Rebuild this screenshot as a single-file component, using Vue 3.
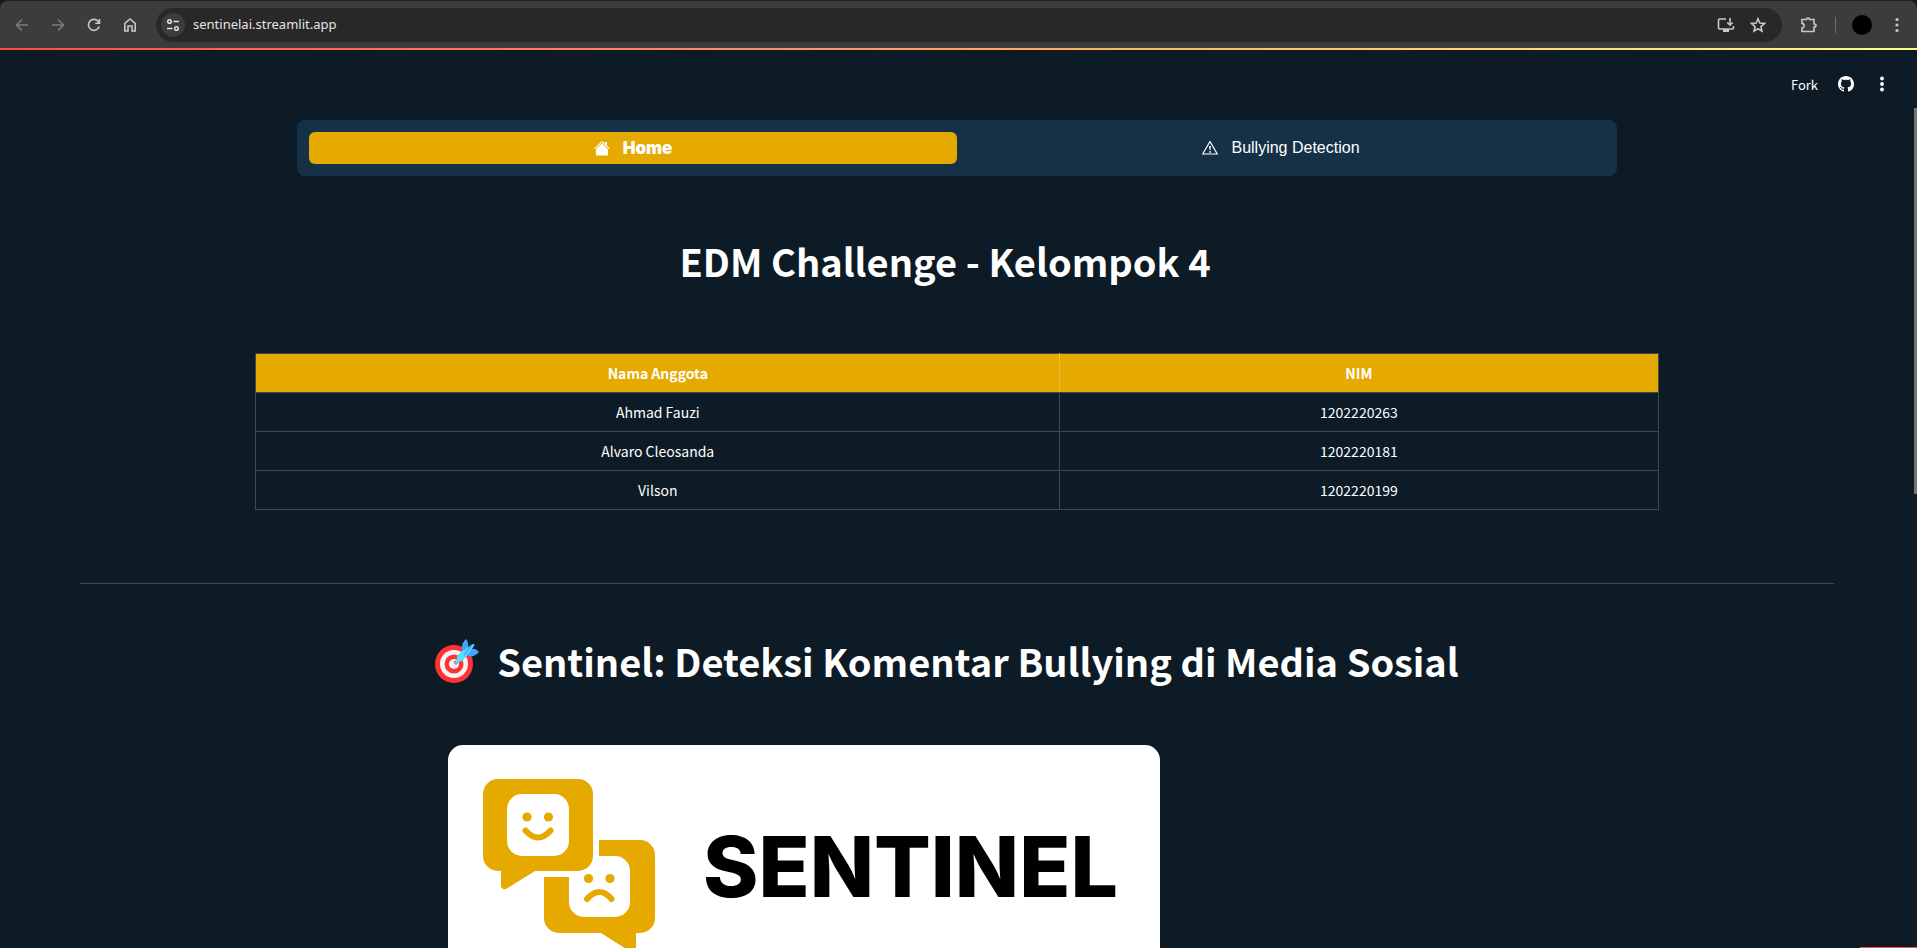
<script setup>
const members = [
  { name: 'Ahmad Fauzi', nim: '1202220263' },
  { name: 'Alvaro Cleosanda', nim: '1202220181' },
  { name: 'Vilson', nim: '1202220199' },
]
</script>

<template>
  <div class="window">
    <header class="browser">
      <nav class="controls" aria-label="Browser">
        <button class="icon-btn dim" aria-label="Back">
          <svg viewBox="0 0 16 16"><path d="M14 8H3M8 2.5 2.5 8 8 13.500" /></svg>
        </button>
        <button class="icon-btn dim" aria-label="Forward">
          <svg viewBox="0 0 16 16"><path d="M2 8h11M8 2.500 13.500 8 8 13.500" /></svg>
        </button>
        <button class="icon-btn" aria-label="Reload">
          <svg viewBox="0 0 16 16"><path d="M13.200 9.500A5.500 5.500 0 1 1 12.500 4.800L13.500 6M13.500 2v4.200H9.300" /></svg>
        </button>
        <button class="icon-btn" aria-label="Home page">
          <svg viewBox="0 0 16 16"><path d="M2.800 6.300 8 2l5.200 4.300V14H10V9H6v5H2.800z" /></svg>
        </button>
      </nav>
      <div class="address">
        <button class="site" aria-label="Site information">
          <svg viewBox="0 0 16 16"><circle cx="4.500" cy="4.500" r="1.800" /><path d="M8.500 4.500H14M2 11.500h5.500" /><circle cx="11.500" cy="11.500" r="1.800" /></svg>
        </button>
        <input class="url" aria-label="Address" value="sentinelai.streamlit.app" />
        <button class="icon-btn" aria-label="Install app">
          <svg class="wide" viewBox="0 0 18 16"><path d="M9 2H2.500Q1.500 2 1.500 3v8q0 1 1 1h13q1 0 1-1V9M13 1v7M10.300 5.500 13 8.200l2.700-2.700" /><path class="solid" d="M6 12h6v3H6z" /></svg>
        </button>
        <button class="icon-btn" aria-label="Bookmark">
          <svg viewBox="0 0 16 16"><path d="m8 1.800 1.800 4.300 4.600.4-3.500 3.100 1.100 4.600L8 11.800l-4 2.400 1.100-4.600L1.600 6.500l4.600-.4z" /></svg>
        </button>
      </div>
      <div class="extras">
        <button class="icon-btn" aria-label="Extensions">
          <svg class="wide" viewBox="0 0 18 16"><path d="M2 2.500h4.500Q6.500 1 8 1t1.500 1.500H14V7q2 0 2 1.500T14 10v4.500H2V11q2.200-.3 2.200-2.300T2 6.400z" /></svg>
        </button>
        <span class="divider"></span>
        <button class="avatar" aria-label="Profile"></button>
        <button class="icon-btn" aria-label="Browser menu">
          <svg viewBox="0 0 16 16"><g class="solid"><circle cx="8" cy="2.500" r="1.600" /><circle cx="8" cy="8" r="1.600" /><circle cx="8" cy="13.500" r="1.600" /></g></svg>
        </button>
      </div>
    </header>

    <div class="rainbow"></div>

    <div class="toolbar">
      <button class="fork">Fork</button>
      <a class="tool" href="#github" aria-label="GitHub repository">
        <svg viewBox="0 0 16 16"><path d="M8 0C3.580 0 0 3.580 0 8c0 3.540 2.290 6.530 5.470 7.590.4.070.55-.17.55-.38 0-.19-.01-.82-.01-1.490-2.010.37-2.530-.49-2.690-.94-.09-.23-.48-.94-.82-1.130-.28-.15-.68-.52-.01-.53.63-.01 1.080.58 1.230.82.72 1.210 1.870.87 2.330.66.070-.52.28-.87.510-1.070-1.780-.2-3.640-.89-3.640-3.950 0-.87.31-1.590.82-2.150-.08-.2-.36-1.020.08-2.120 0 0 .67-.21 2.200.82.64-.18 1.320-.27 2-.27s1.360.09 2 .27c1.530-1.040 2.200-.82 2.200-.82.44 1.100.16 1.920.08 2.120.51.56.82 1.270.82 2.150 0 3.070-1.870 3.750-3.650 3.950.29.25.54.73.54 1.480 0 1.070-.01 1.930-.01 2.200 0 .21.15.46.55.38A8.010 8.010 0 0 0 16 8c0-4.420-3.580-8-8-8z" /></svg>
      </a>
      <button class="tool" aria-label="App menu">
        <svg viewBox="0 0 16 16"><circle cx="8" cy="2.500" r="1.900" /><circle cx="8" cy="8" r="1.900" /><circle cx="8" cy="13.500" r="1.900" /></svg>
      </button>
    </div>

    <main class="page">
      <nav class="tabs" aria-label="Pages">
        <a class="tab active" href="#home">
          <svg viewBox="0 0 16 16"><path d="M8 3.300l6 6V14.500a1 1 0 0 1-1 1H3a1 1 0 0 1-1-1V9.300z" /><path d="M7.300 1.500a1 1 0 0 1 1.400 0L11 3.800V2h2v3.800l2.700 2.700-.7.700L8 2.200 1 9.200l-.7-.7z" /></svg>
          Home
        </a>
        <a class="tab" href="#detection">
          <svg viewBox="0 0 16 16"><path class="line" d="M8 1.500 15.300 14H.7z" /><path d="M7.100 6h1.800l-.4 4h-1z" /><circle cx="8" cy="11.900" r=".9" /></svg>
          Bullying Detection
        </a>
      </nav>

      <h1 class="title">EDM Challenge - Kelompok 4</h1>

      <table class="members">
        <thead>
          <tr><th scope="col">Nama Anggota</th><th scope="col">NIM</th></tr>
        </thead>
        <tbody>
          <tr v-for="m in members" :key="m.nim"><td>{{ m.name }}</td><td>{{ m.nim }}</td></tr>
        </tbody>
      </table>

      <hr class="rule" />

      <h1 class="title project">
        <svg class="target" viewBox="0 0 44 44" aria-hidden="true">
          <circle cx="19" cy="25" r="19" fill="#ff3333" />
          <circle cx="19" cy="25" r="14" fill="#f4f4f4" />
          <circle cx="19" cy="25" r="9.500" fill="#ff3333" />
          <circle cx="19" cy="25" r="5" fill="#f4f4f4" />
          <circle cx="21" cy="23.500" r="2.300" fill="#a0a0a8" />
          <path d="M27 12Q26 4 31 0q3 3 2 10zM32 16q5 4 12-3-3-4-9-3z" fill="#46a2ff" />
          <path d="M21 22q1-8 8-11l9-6q2 0 1 2l-6 8q-3 7-12 9z" fill="#50e2ff" />
          <path d="m29 16 8-10" stroke="#46a2ff" stroke-width="1.500" fill="none" />
        </svg>
        <span>Sentinel: Deteksi Komentar Bullying di Media Sosial</span>
      </h1>

      <figure class="banner">
        <svg class="bubbles" viewBox="0 0 172 184" aria-hidden="true">
          <g fill="#e5a900">
            <path d="M15 0h80a15 15 0 0 1 15 15v62a15 15 0 0 1-15 15H52L23 110q-5 1-5-4V92h-3A15 15 0 0 1 0 77V15A15 15 0 0 1 15 0z" />
            <path d="M116 61h41a15 15 0 0 1 15 15v63a15 15 0 0 1-15 15h-4v16q0 5-5 3L118 154H76a15 15 0 0 1-15-15V98h55z" />
          </g>
          <g fill="#fff">
            <rect x="24" y="15" width="62" height="62" rx="15" />
            <path d="M86 98h15q13-2 15-16v-5h16a15 15 0 0 1 15 15v31a15 15 0 0 1-15 15h-31a15 15 0 0 1-15-15z" />
            <path d="M86 97h15q13-2 14-14h6v28H86z" />
          </g>
          <g fill="#e5a900">
            <circle cx="44" cy="38" r="4.600" /><circle cx="65.500" cy="38" r="4.600" />
            <circle cx="105.500" cy="99.500" r="4.600" /><circle cx="127" cy="99.500" r="4.600" />
          </g>
          <g fill="none" stroke="#e5a900" stroke-width="6" stroke-linecap="round">
            <path d="M42.500 51.500q12.500 14 25 0" /><path d="M104 120q12.500-14 24.500 0" />
          </g>
        </svg>
        <figcaption class="brand">SENTINEL</figcaption>
      </figure>
    </main>

    <span class="scroll-thumb"></span>
    <span class="badge-edge"></span>
  </div>
</template>

<style>
body {
  margin: 0;
  background: #0d1b26;
}
</style>

<style scoped>
.window {
  position: relative;
  height: 100vh;
  overflow: hidden;
  display: flex;
  flex-direction: column;
  background: #0d1b26;
  color: #fff;
  font-family: "Noto Sans CJK SC", "Noto Sans", sans-serif;
}
button {
  border: 0;
  padding: 0;
  background: none;
  color: inherit;
  font: inherit;
}
a {
  color: inherit;
  text-decoration: none;
}
svg {
  display: block;
  flex: none;
}
.browser {
  flex: none;
  display: flex;
  align-items: center;
  height: 47px;
  border-top: 1px solid #202020;
  background: #3c3c3c;
  border-radius: 8px 8px 0 0;
  color: #c7c7c7;
}
.controls {
  display: flex;
  gap: 20px;
  padding: 0 18px 0 14px;
}
.icon-btn svg {
  width: 16px;
  height: 16px;
  fill: none;
  stroke: currentColor;
  stroke-width: 1.6;
}
.icon-btn svg.wide {
  width: 18px;
}
.icon-btn .solid {
  fill: currentColor;
  stroke: none;
}
.dim {
  color: #7c7c7c;
}
.address {
  flex: 1;
  display: flex;
  align-items: center;
  gap: 15px;
  height: 34px;
  box-sizing: border-box;
  padding: 0 16px 0 5px;
  border-radius: 17px;
  background: #282828;
}
.site {
  width: 24px;
  height: 24px;
  margin-right: -7px;
  display: grid;
  place-items: center;
  border-radius: 50%;
  background: #3c3c3c;
}
.site svg {
  width: 16px;
  height: 16px;
  fill: none;
  stroke: #dedede;
  stroke-width: 1.5;
}
.url {
  flex: 1;
  min-width: 0;
  border: 0;
  padding: 0 0 2px;
  outline: 0;
  background: none;
  color: #e3e3e3;
  font: 13px "Noto Sans", sans-serif;
}
.extras {
  display: flex;
  align-items: center;
  gap: 17px;
  padding: 0 12px 0 18px;
}
.divider {
  width: 1px;
  height: 16px;
  margin-right: -1px;
  background: #6c6c6c;
}
.avatar {
  width: 20px;
  height: 20px;
  border-radius: 50%;
  background: #000;
}
.rainbow {
  flex: none;
  height: 2px;
  background: linear-gradient(90deg, #ff4b4b, #fffd80);
}
.toolbar {
  flex: none;
  display: flex;
  align-items: center;
  justify-content: flex-end;
  gap: 20px;
  box-sizing: border-box;
  height: 70px;
  padding: 0 27px 2px 0;
}
.fork {
  font-size: 13px;
}
.tool svg {
  width: 16px;
  height: 16px;
  fill: currentColor;
}
.page {
  flex: 1;
  min-height: 0;
  overflow: hidden;
  padding: 0 83px 0 80px;
}
.tabs {
  display: grid;
  grid-template-columns: 1fr 1fr;
  max-width: 1296px;
  margin: 0 auto;
  padding: 12px;
  border-radius: 8px;
  background: #143147;
}
.tab {
  display: flex;
  align-items: center;
  justify-content: center;
  gap: 13px;
  height: 32px;
  border-radius: 6px;
  font: 16px "Liberation Sans", Arial, sans-serif;
}
.tab svg {
  width: 16px;
  height: 16px;
  fill: currentColor;
}
.tab .line {
  fill: none;
  stroke: currentColor;
  stroke-width: 1.2;
  stroke-linejoin: round;
}
.active {
  background: #e5a900;
  font: 900 17px Inter, sans-serif;
}
.title {
  margin: 55px 24px 0 0;
  font-size: 38px;
  line-height: 60px;
  font-weight: 600;
  text-align: center;
}
.members {
  width: 80%;
  margin: 62px auto 0;
  border-collapse: collapse;
  font-size: 14px;
  line-height: 24px;
  text-align: center;
}
.members th,
.members td {
  padding: 7px 12px;
  border: 1px solid #3d4851;
}
.members th {
  background: #e5a900;
  font-weight: 700;
}
.members th:first-child {
  border-right-color: #ebbc3a;
}
.rule {
  height: 1px;
  margin: 73px 0 0;
  border: 0;
  background: #3d4851;
}
.project {
  display: flex;
  justify-content: center;
  align-items: center;
  gap: 18px;
  margin: 47px 20px 0 0;
}
.target {
  width: 44px;
  height: 44px;
}
.banner {
  display: flex;
  align-items: flex-start;
  box-sizing: border-box;
  width: 712px;
  height: 400px;
  margin: 54px 0 0 368px;
  padding: 34px 35px;
  border-radius: 15px;
  background: #fff;
}
.bubbles {
  width: 172px;
  height: 184px;
}
.brand {
  margin: 40px 0 0 48px;
  color: #000;
  font: 800 84px/96px Inter, sans-serif;
}
.scroll-thumb {
  position: absolute;
  top: 108px;
  right: 0;
  width: 3px;
  height: 386px;
  background: #6d767d;
}
.badge-edge {
  position: absolute;
  right: 0;
  bottom: 0;
  width: 57px;
  height: 1px;
  background: #ff4b4b;
}
</style>
